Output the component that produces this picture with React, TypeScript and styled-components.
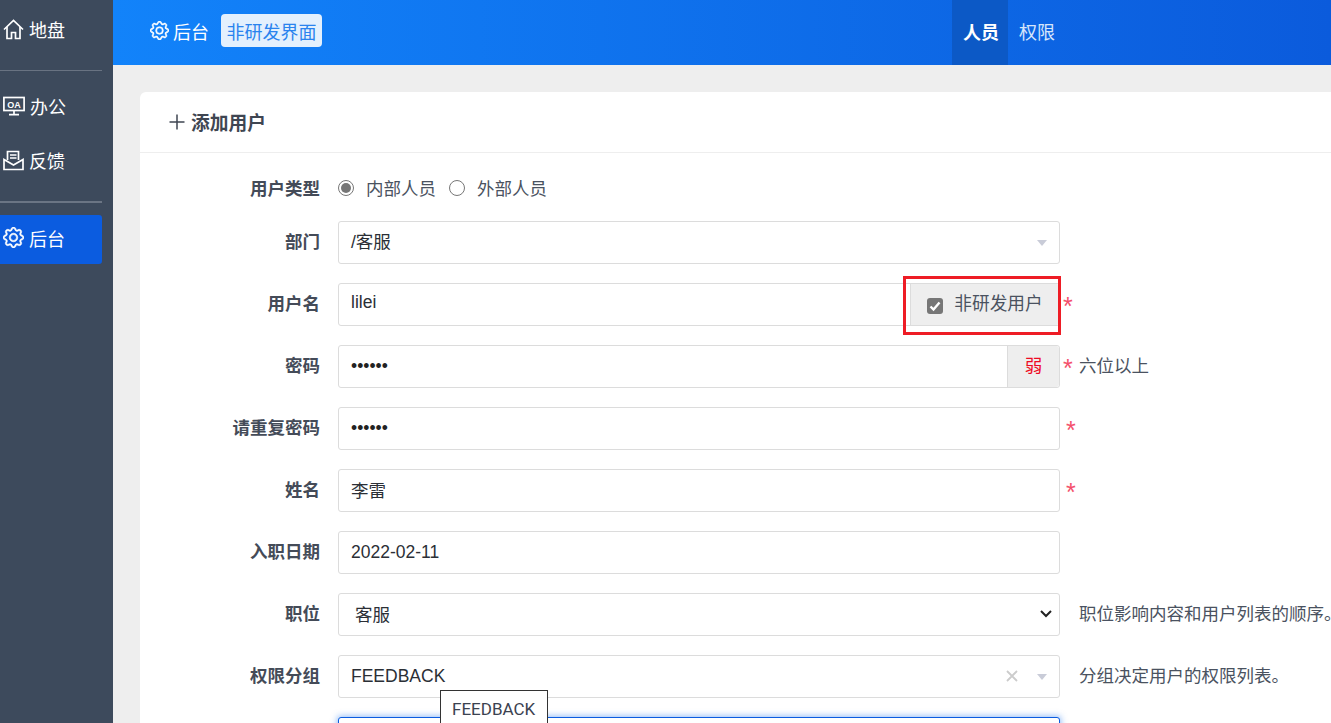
import React from "react";
import styled, { createGlobalStyle } from "styled-components";
import { BsGear } from "react-icons/bs";

const Global = createGlobalStyle`
  html, body { margin: 0; padding: 0; height: 723px; overflow: hidden; background: #eeeeee; }
  body { font-family: "Liberation Sans", "Noto Sans CJK SC", sans-serif; font-size: 17.5px; color: #3f4652; }
  * { box-sizing: border-box; }
`;

const Page = styled.div`
  display: flex;
  width: 1331px;
  height: 723px;
  overflow: hidden;
  position: relative;
`;
const Sidebar = styled.aside`
  width: 113px;
  flex: none;
  background: #3d4a5c;
  padding-top: 10px;
`;
const SideItem = styled.div<{ $active?: boolean; $after?: number }>`
  width: 102px;
  height: ${(p) => (p.$active ? 49 : 38)}px;
  padding: 0 0 ${(p) => (p.$active ? 4 : 0)}px 3px;
  display: flex;
  align-items: center;
  gap: 5px;
  color: #fff;
  font-size: 18px;
  border-radius: 0 3px 3px 0;
  background: ${(p) => (p.$active ? "#0b5ce0" : "transparent")};
  margin-bottom: ${(p) => p.$after ?? 0}px;
  svg { flex: none; stroke: currentColor; }
`;
const SideRule = styled.div<{ $thick?: boolean; $after: number }>`
  width: 102px;
  height: ${(p) => (p.$thick ? 2 : 1)}px;
  background: ${(p) => (p.$thick ? "#6b7584" : "#697382")};
  margin-bottom: ${(p) => p.$after}px;
`;
const Main = styled.main`
  flex: 1;
  min-width: 0;
  display: flex;
  flex-direction: column;
`;
const Header = styled.header`
  height: 65px;
  flex: none;
  display: flex;
  align-items: flex-start;
  padding-left: 37px;
  background: linear-gradient(90deg, #1283fa 0%, #0b5bdc 100%);
  color: #fff;
`;
const Brand = styled.div`
  height: 61px;
  display: flex;
  align-items: center;
  gap: 4px;
  font-size: 18px;
  color: #fff;
  svg { stroke: currentColor; stroke-width: 0.5; }
`;
const ModeChip = styled.div`
  margin: 14px 0 0 12px;
  width: 101px;
  height: 33px;
  display: flex;
  align-items: center;
  justify-content: center;
  background: #e3f0fd;
  color: #2a83ee;
  border-radius: 4px;
  font-size: 18px;
`;
const Tabs = styled.nav`
  display: flex;
  margin-left: 630px;
  height: 65px;
`;
const Tab = styled.div<{ $active?: boolean }>`
  width: ${(p) => (p.$active ? 56 : 58)}px;
  display: flex;
  align-items: center;
  padding: 0 0 4px 11px;
  font-size: 18px;
  font-weight: ${(p) => (p.$active ? 700 : 400)};
  color: ${(p) => (p.$active ? "#fff" : "#d6e6fb")};
  background: ${(p) => (p.$active ? "#0c59c6" : "transparent")};
`;
const Content = styled.div`
  flex: 1;
  padding: 27px 0 0 27px;
  overflow: hidden;
`;
const Card = styled.section`
  width: 1300px;
  height: 800px;
  background: #fff;
  border-radius: 6px 0 0 0;
`;
const CardHead = styled.div`
  height: 61px;
  border-bottom: 1px solid #eeeeee;
  display: flex;
  align-items: center;
  padding: 0 0 2px 28px;
  gap: 5px;
  font-weight: 700;
  font-size: 18.75px;
  color: #3f4652;
  svg { flex: none; margin-top: 2px; }
`;
const FormBody = styled.div`
  padding-top: 21px;
  display: flex;
  flex-direction: column;
  gap: 19px;
`;
const Row = styled.div<{ $short?: boolean }>`
  display: grid;
  grid-template-columns: 180px 722px auto;
  column-gap: 18px;
  height: ${(p) => (p.$short ? 27.5 : 43)}px;
  align-items: center;
`;
const Label = styled.label<{ $flat?: boolean }>`
  text-align: right;
  font-weight: 700;
  color: #444b58;
  font-size: 17.5px;
  white-space: nowrap;
  padding-bottom: ${(p) => (p.$flat ? 0 : 4)}px;
`;
const RadioGroup = styled.div`
  display: flex;
  align-items: center;
  color: #4a5260;
`;
const Radio = styled.span<{ $on?: boolean }>`
  width: 16px;
  height: 16px;
  border: 1px solid #777;
  border-radius: 50%;
  display: flex;
  align-items: center;
  justify-content: center;
  margin-right: 12px;
  &::after {
    content: "";
    width: 10px;
    height: 10px;
    border-radius: 50%;
    background: ${(p) => (p.$on ? "#767676" : "transparent")};
  }
`;
const RadioText = styled.span`
  margin-right: 13px;
`;
const Field = styled.div<{ $focus?: boolean }>`
  height: 43px;
  border: 1px solid ${(p) => (p.$focus ? "#0b5ce0" : "#dcdcdc")};
  border-radius: 3px;
  display: flex;
  align-items: center;
  background: #fff;
  color: #2b2f36;
  font-size: 17.5px;
  padding-left: 12px;
  box-shadow: ${(p) => (p.$focus ? "0 0 6px 1px rgba(36,120,240,.5)" : "none")};
`;
const FieldText = styled.span<{ $pad?: number; $lift?: number }>`
  flex: 1;
  padding-left: ${(p) => p.$pad ?? 0}px;
  padding-bottom: ${(p) => p.$lift ?? 0}px;
  white-space: nowrap;
`;
const Dots = styled.span`
  flex: 1;
  font-size: 17.5px;
  color: #222;
`;
const Addon = styled.div<{ $w: number; $wide?: boolean }>`
  width: ${(p) => p.$w}px;
  align-self: stretch;
  flex: none;
  background: #eeeeee;
  border-left: 1px solid #dcdcdc;
  display: flex;
  align-items: center;
  justify-content: center;
  border-radius: 0 3px 3px 0;
  color: #4a5260;
  font-size: ${(p) => (p.$wide ? 17.7 : 17.5)}px;
  padding-bottom: 4px;
`;
const Weak = styled.span`
  color: #ee0a24;
`;
const CheckBox = styled.span`
  width: 16px;
  height: 16px;
  margin: 8px 11px 0 0;
  background: #767676;
  border-radius: 3px;
  display: flex;
  align-items: center;
  justify-content: center;
`;
const Arrow = styled.span`
  width: 0;
  height: 0;
  border-left: 5.5px solid transparent;
  border-right: 5.5px solid transparent;
  border-top: 6px solid #c9ccd8;
  margin-right: 12px;
  margin-top: 1px;
  flex: none;
`;
const Clear = styled.span`
  display: flex;
  margin-right: 19px;
`;
const Chevron = styled.span`
  display: flex;
  margin-right: 6px;
`;
const Side = styled.div`
  display: flex;
  align-items: center;
  white-space: nowrap;
  color: #4a5260;
  margin-left: -12px;
`;
const Star = styled.span<{ $near?: boolean }>`
  color: #f4516c;
  font-size: 25px;
  line-height: 1;
  height: 25px;
  width: 13px;
  padding-top: 2px;
  margin-left: ${(p) => (p.$near ? -3 : 0)}px;
  margin-right: ${(p) => (p.$near ? 3 : 0)}px;
`;
const Hint = styled.span<{ $inset?: boolean }>`
  margin-left: ${(p) => (p.$inset ? 0 : 13)}px;
  padding-bottom: 4px;
  color: #4a5260;
`;
const Tip = styled.div`
  position: absolute;
  left: 440px;
  top: 690px;
  width: 108px;
  height: 40px;
  background: #fff;
  border: 1px solid #333;
  padding: 8px 0 0 11px;
  font-family: Roboto, sans-serif;
  font-size: 17px;
  color: #3b4250;
`;
const Annotation = styled.div`
  position: absolute;
  left: 903px;
  top: 276px;
  width: 158px;
  height: 59px;
  border: 3px solid #ee1c25;
`;

const HomeIcon = () => (
  <svg width="21" height="21" viewBox="0 0 21 21" fill="none" strokeWidth="1.7">
    <path d="M1 10.5L10.5 1.5L20 10.5" />
    <path d="M4 8v11.5h4.5v-6h4v6H17V8" />
  </svg>
);
const OaIcon = () => (
  <svg width="22" height="21" viewBox="0 0 22 21" fill="none" strokeWidth="1.7">
    <rect x="0.9" y="1.5" width="20.2" height="13" />
    <text x="11" y="11.5" textAnchor="middle" fontSize="9" fontWeight="700" fill="#fff" stroke="none" fontFamily="Liberation Sans">OA</text>
    <path d="M11 15v3M6 18.7h10" />
  </svg>
);
const MailIcon = () => (
  <svg width="21" height="21" viewBox="0 0 21 21" fill="none" strokeWidth="1.7">
    <path d="M4.5 10V1.5h11V10" />
    <path d="M7 5h6.5M7 8h6.5" />
    <path d="M1 9.5v10h19v-10l-9.5 5.5z" />
  </svg>
);
const PlusIcon = () => (
  <svg width="18" height="18" viewBox="0 0 18 18" stroke="#3f4652" strokeWidth="1.5">
    <path d="M9 1.5v15M1.5 9h15" />
  </svg>
);
const CheckMark = () => (
  <svg width="12" height="12" viewBox="0 0 12 12" fill="none" stroke="#fff" strokeWidth="2.4">
    <path d="M1.5 6.5l3 3 6-7" />
  </svg>
);
const ClearIcon = () => (
  <svg width="12" height="12" viewBox="0 0 12 12" stroke="#ccc" strokeWidth="1.8">
    <path d="M1 1l10 10M11 1L1 11" />
  </svg>
);
const ChevronIcon = () => (
  <svg width="14" height="10" viewBox="0 0 14 10" fill="none" stroke="#222" strokeWidth="2">
    <path d="M2 2l5 5 5-5" />
  </svg>
);

export default function App() {
  return (
    <Page>
      <Global />
      <Sidebar>
        <SideItem $after={22}><HomeIcon /><span>地盘</span></SideItem>
        <SideRule $after={16} />
        <SideItem $after={16}><OaIcon /><span>办公</span></SideItem>
        <SideItem $after={22}><MailIcon /><span>反馈</span></SideItem>
        <SideRule $thick $after={12} />
        <SideItem $active><BsGear size={21} strokeWidth={0.5} /><span>后台</span></SideItem>
      </Sidebar>
      <Main>
        <Header>
          <Brand><BsGear size={19} /><span>后台</span></Brand>
          <ModeChip>非研发界面</ModeChip>
          <Tabs>
            <Tab $active>人员</Tab>
            <Tab>权限</Tab>
          </Tabs>
        </Header>
        <Content>
          <Card>
            <CardHead><PlusIcon /><span>添加用户</span></CardHead>
            <FormBody>
              <Row $short>
                <Label $flat>用户类型</Label>
                <RadioGroup>
                  <Radio $on /><RadioText>内部人员</RadioText>
                  <Radio /><RadioText>外部人员</RadioText>
                </RadioGroup>
              </Row>
              <Row>
                <Label>部门</Label>
                <Field><FieldText $lift={4}>/客服</FieldText><Arrow /></Field>
              </Row>
              <Row>
                <Label>用户名</Label>
                <Field>
                  <FieldText $lift={4}>lilei</FieldText>
                  <Addon $w={149} $wide><CheckBox><CheckMark /></CheckBox>非研发用户</Addon>
                </Field>
                <Side><Star $near>*</Star></Side>
              </Row>
              <Row>
                <Label>密码</Label>
                <Field><Dots>••••••</Dots><Addon $w={52}><Weak>弱</Weak></Addon></Field>
                <Side><Star $near>*</Star><Hint $inset>六位以上</Hint></Side>
              </Row>
              <Row>
                <Label>请重复密码</Label>
                <Field><Dots>••••••</Dots></Field>
                <Side><Star>*</Star></Side>
              </Row>
              <Row>
                <Label>姓名</Label>
                <Field><FieldText $lift={2}>李雷</FieldText></Field>
                <Side><Star>*</Star></Side>
              </Row>
              <Row>
                <Label>入职日期</Label>
                <Field><FieldText>2022-02-11</FieldText></Field>
              </Row>
              <Row>
                <Label>职位</Label>
                <Field>
                  <FieldText $pad={4} $lift={2}>客服</FieldText>
                  <Chevron><ChevronIcon /></Chevron>
                </Field>
                <Side><Hint>职位影响内容和用户列表的顺序。</Hint></Side>
              </Row>
              <Row>
                <Label>权限分组</Label>
                <Field>
                  <FieldText>FEEDBACK</FieldText>
                  <Clear><ClearIcon /></Clear>
                  <Arrow />
                </Field>
                <Side><Hint>分组决定用户的权限列表。</Hint></Side>
              </Row>
              <Row>
                <span />
                <Field $focus />
              </Row>
            </FormBody>
          </Card>
        </Content>
      </Main>
      <Tip>FEEDBACK</Tip>
      <Annotation />
    </Page>
  );
}
